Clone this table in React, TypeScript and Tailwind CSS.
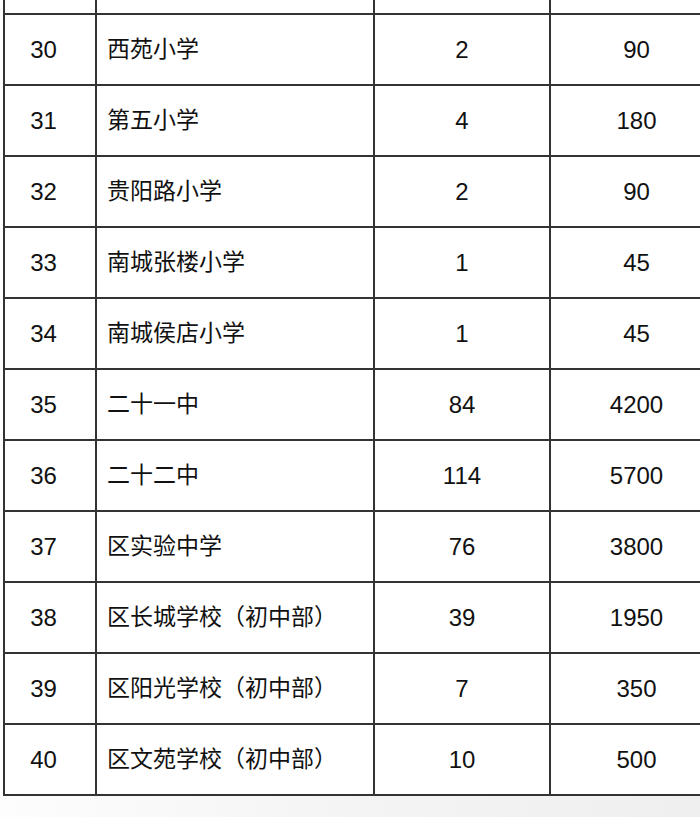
const rows: [string, string, string, string][] = [
  ["30", "西苑小学", "2", "90"],
  ["31", "第五小学", "4", "180"],
  ["32", "贵阳路小学", "2", "90"],
  ["33", "南城张楼小学", "1", "45"],
  ["34", "南城侯店小学", "1", "45"],
  ["35", "二十一中", "84", "4200"],
  ["36", "二十二中", "114", "5700"],
  ["37", "区实验中学", "76", "3800"],
  ["38", "区长城学校（初中部）", "39", "1950"],
  ["39", "区阳光学校（初中部）", "7", "350"],
  ["40", "区文苑学校（初中部）", "10", "500"],
];

const line = "border-[#333333]";

export default function App() {
  return (
    <div
      className="w-[700px] h-[817px] overflow-hidden bg-white text-[#111] flex flex-col"
      style={{ fontFamily: '"Liberation Sans", "Noto Sans CJK SC", sans-serif' }}
    >
      <div className={`ml-[3px] w-[726px] border-l-2 ${line}`}>
        {/* partial row cut off at the top */}
        <div className={`flex h-[15px] border-b-2 ${line}`}>
          <div className={`w-[92px] border-r-2 ${line}`} />
          <div className={`w-[278px] border-r-2 ${line}`} />
          <div className={`w-[176px] border-r-2 ${line}`} />
          <div className="w-[174px]" />
        </div>
        {rows.map(([no, name, a, b]) => (
          <div key={no} className={`flex h-[71px] border-b-2 ${line} text-[23px] leading-none`}>
            <div className={`w-[92px] border-r-2 ${line} flex items-center justify-center pr-[13px] text-[24px]`}>
              {no}
            </div>
            <div className={`w-[278px] border-r-2 ${line} flex items-center pl-[10px]`}>
              {name}
            </div>
            <div className={`w-[176px] border-r-2 ${line} flex items-center justify-center text-[24px]`}>
              {a}
            </div>
            <div className="w-[174px] flex items-center justify-center pr-[3px] text-[24px]">{b}</div>
          </div>
        ))}
      </div>
      <div className="flex-1 bg-gradient-to-r from-[#fdfdfd] via-[#f4f4f4] to-[#efefef]" />
    </div>
  );
}
